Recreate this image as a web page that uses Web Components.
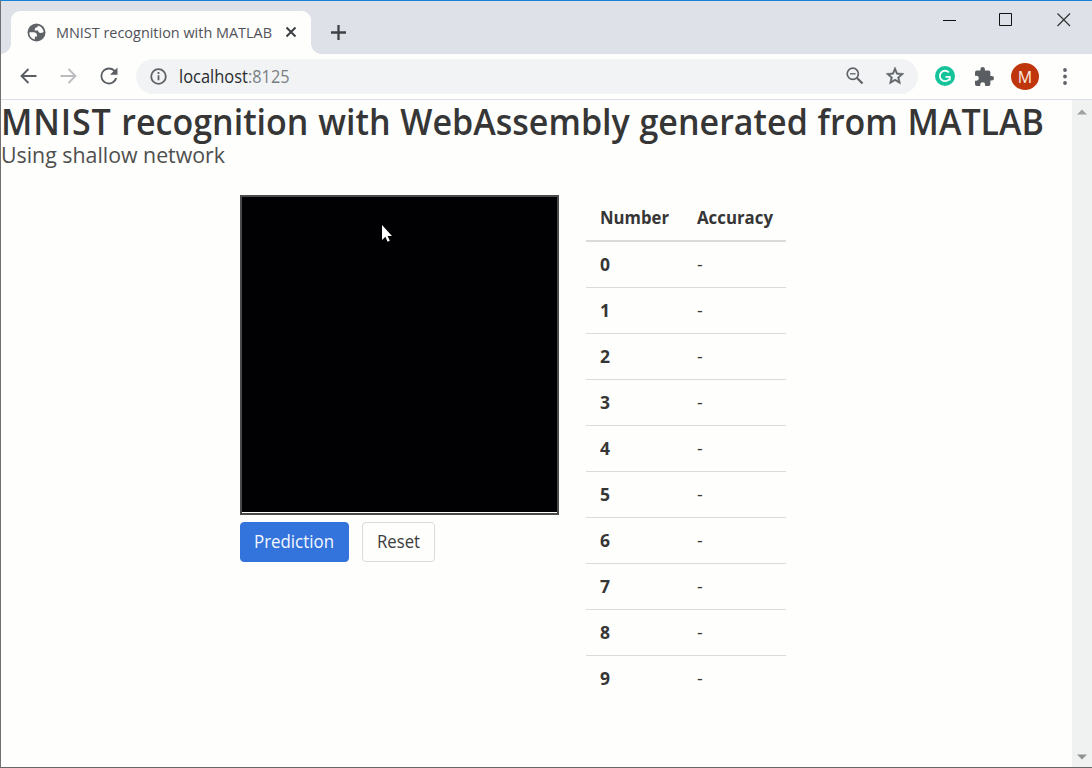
<!DOCTYPE html>
<html lang="en">
<head>
<meta charset="utf-8">
<title>MNIST recognition with MATLAB</title>
<style>
html,body{margin:0;height:100%;overflow:hidden;background:#fefefd}
body{font-family:"Open Sans","Noto Sans",sans-serif;color:#363636}
.wide{letter-spacing:.9px}
</style>
</head>
<body>
<browser-window>
  <tab-strip slot="tabs"><fit-text w="216">MNIST recognition with MATLAB</fit-text></tab-strip>
  <address-bar slot="toolbar" host="localhost" port=":8125"></address-bar>
  <page-heading>
    <fit-text w="1043"><span class="wide">MNIST</span> recognition with WebAssembly generated from MATLAB</fit-text>
    <fit-text slot="sub" w="224">Using shallow network</fit-text>
  </page-heading>
  <digit-app></digit-app>
</browser-window>
<script>
const define = (name, html, setup) => customElements.define(name, class extends HTMLElement {
  connectedCallback() {
    if (this.shadowRoot) return;
    const t = document.createElement('template');
    t.innerHTML = html;
    const root = this.attachShadow({mode: 'open'});
    root.append(t.content.cloneNode(true));
    if (setup) setup(this, root);
  }
});

// Condenses its slotted text to the width given in "w".
define('fit-text', `<style>
:host{display:inline-block;white-space:nowrap;overflow:visible;text-align:left}
span{display:inline-block;transform-origin:0 50%}
</style><span><slot></slot></span>`, (el, root) => {
  const w = +el.getAttribute('w'), s = root.querySelector('span');
  el.style.width = w + 'px';
  const fit = () => {
    s.style.transform = '';
    const n = s.getBoundingClientRect().width;
    if (n) s.style.transform = 'scaleX(' + w / n + ')';
  };
  requestAnimationFrame(fit);
});

define('browser-window', `<style>
:host{display:flex;flex-direction:column;box-sizing:border-box;height:768px;width:1092px;
border-top:1px solid #1783d8;border-left:1px solid #6f6f74;border-bottom:1px solid #68686a;background:#fefefd}
.view{flex:1;min-height:0;display:flex}
main{flex:1;min-width:0}
</style><slot name="tabs"></slot><slot name="toolbar"></slot>
<div class="view"><main><slot></slot></main><scroll-rail></scroll-rail></div>`);

define('scroll-rail', `<style>
:host{width:20px;background:#f0f1f1;display:flex;flex-direction:column;justify-content:space-between;align-items:center;box-sizing:border-box;padding:9px 0 7px}
svg{display:block}
</style>
<svg width="10" height="6"><path d="M0 5.5 5 .5l5 5z" fill="#a0a0a0"/></svg>
<svg width="10" height="6"><path d="M0 .5h10l-5 5z" fill="#929292"/></svg>`);

define('tab-strip', `<style>
:host{display:flex;height:53px;background:#dee1e8;position:relative;flex:none}
.tab{margin:10px 0 0 10px;width:300px;box-sizing:border-box;height:43px;background:#fefefd;border-radius:9px 9px 0 0;display:flex;align-items:center;padding-left:16px;font-size:15px;color:#505257;position:relative}
.tab::before,.tab::after{content:"";position:absolute;bottom:0;width:10px;height:10px}
.tab::before{left:-10px;background:radial-gradient(circle at 0 0,transparent 9.5px,#fefefd 10px)}
.tab::after{right:-10px;background:radial-gradient(circle at 100% 0,transparent 9.5px,#fefefd 10px)}
.globe{margin-right:10px}
.label{margin-bottom:2px;display:block}
.x{margin-left:13px;margin-bottom:1px}
.plus{margin:24px 0 0 20px}
.win{margin:12px 21px 0 auto;height:14px}
svg{display:block;flex:none}
</style>
<div class="tab">
<svg class="globe" width="19" height="19" viewBox="0 0 19 19"><circle cx="9.500" cy="9.500" r="9" fill="#5f6368"/><path fill="#fefefd" d="M2.400 9.300h4.300c1.900 0 3.200 1 3.300 2.900v1.300H7.900v3.100A7.200 7.200 0 0 1 2.400 9.300zM11.300 2.700c2.800.7 4.900 3 5.300 6-.6.800-1.500 1.200-2.700 1.200-1.900 0-2.800-.8-2.800-2.300H7.700c-.1-2.200.7-3.300 2.600-3.300 0-.7.300-1.200 1-1.600z"/></svg>
<div class="label"><slot></slot></div>
<svg class="x" width="12" height="12"><path d="m1.500 1.500 9 9m0-9-9 9" stroke="#3c4043" stroke-width="2"/></svg>
</div>
<svg class="plus" width="15" height="15"><path d="M7.500 0v15M0 7.500h15" stroke="#3f4246" stroke-width="2.300"/></svg>
<svg class="win" width="128" height="14"><path d="M0 7.500h13M56.500.5h12v12h-12z" fill="none" stroke="#111"/><path d="m114.500.5 12.500 12.500m0-12.500L114.500 13" stroke="#333" stroke-width="1.200"/></svg>`);

define('address-bar', `<style>
:host{display:flex;height:45px;flex:none;border-bottom:1px solid #dcdee5;align-items:center;color:#5f6368;background:#fefefd;box-sizing:content-box}
svg{display:block;flex:none;margin-bottom:1px}
.back{margin-left:19px}.fwd{margin-left:23px}.re{margin-left:23px}
.box{margin-left:18px;width:782px;height:35px;border-radius:18px;background:#f1f3f4;display:flex;align-items:center;font-size:18px;box-sizing:border-box;padding:0 14px 0 14px}
.info{margin-right:12px}
.host,.port{margin-bottom:2px}
.host{color:#2b2c30}.port{color:#7a7e83}
.zoom{margin-left:auto;margin-right:22px}
.g{margin-left:17px}.p{margin-left:20px}
.av{margin-left:17px;width:28px;height:27px;border-radius:50%;background:#bf360c;color:#fbece5;font-size:16px;display:flex;align-items:center;justify-content:center}
.dots{margin-left:24px}
</style>
<svg class="back" width="17" height="16" fill="none" stroke="#5a5e63" stroke-width="1.900"><path d="M16.500 8H2M8.500 1 1.500 8l7 7"/></svg>
<svg class="fwd" width="17" height="16" fill="none" stroke="#babcbe" stroke-width="1.800"><path d="M.5 8H15M8.500 1l7 7-7 7"/></svg>
<svg class="re" width="18" height="18" viewBox="3.500 3.500 17 17"><path fill="#5a5e63" d="M17.650 6.350A7.960 7.960 0 0 0 12 4a8 8 0 1 0 7.730 10h-1.980A6.200 6.200 0 1 1 12 5.800c1.660 0 3.140.69 4.220 1.780L13 10.800h7V4z"/></svg>
<div class="box">
<svg class="info" width="17" height="17" fill="none" stroke="#5f6368" stroke-width="1.800"><circle cx="8.500" cy="8.500" r="7.300"/><path d="M8.500 7.300v5M8.500 4v2"/></svg>
<fit-text class="host" w="69"></fit-text><fit-text class="port" w="41.500"></fit-text>
<svg class="zoom" width="18" height="18" fill="none" stroke="#5f6368"><circle cx="6.800" cy="6.800" r="5.600" stroke-width="1.700"/><path d="m10.800 10.800 5.700 5.700" stroke-width="2.200"/><path d="M4 6.800h5.600" stroke-width="1.300"/></svg>
<svg width="18" height="18" viewBox="2 2 20 20"><path fill="#5f6368" stroke="#5f6368" stroke-width=".5" d="m22 9.240-7.190-.62L12 2 9.190 8.630 2 9.240l5.460 4.730L5.820 21 12 17.270 18.180 21l-1.630-7.030zM12 15.400l-3.760 2.270 1-4.280-3.320-2.880 4.380-.38L12 6.100l1.710 4.040 4.380.38-3.320 2.880 1 4.280z"/></svg>
</div>
<svg class="g" width="20" height="20"><circle cx="10" cy="10" r="10" fill="#15c39a"/><path d="M13.800 6.300A5.200 5.200 0 1 0 14.300 13M10.500 10.800h4.300v3.700" fill="none" stroke="#f4fffc" stroke-width="1.800"/></svg>
<svg class="p" width="19" height="19" viewBox="2 1 21 21"><path fill="#5a5e63" d="M20.500 11H19V7a2 2 0 0 0-2-2h-4V3.500a2.500 2.500 0 0 0-5 0V5H4a2 2 0 0 0-2 2v3.800h1.500a2.700 2.700 0 0 1 0 5.400H2V20a2 2 0 0 0 2 2h3.800v-1.500a2.700 2.700 0 0 1 5.400 0V22H17a2 2 0 0 0 2-2v-4h1.500a2.500 2.500 0 0 0 0-5z"/></svg>
<div class="av">M</div>
<svg class="dots" width="4" height="17" fill="#5f6368"><circle cx="2" cy="2" r="1.900"/><circle cx="2" cy="8.500" r="1.900"/><circle cx="2" cy="15" r="1.900"/></svg>`,
(el, root) => {
  root.querySelector('.host').textContent = el.getAttribute('host');
  root.querySelector('.port').textContent = el.getAttribute('port');
});

define('page-heading', `<style>
:host{display:block;height:95px}
h1,p{margin:0;white-space:nowrap}
h1{font-size:36px;font-weight:600;line-height:44px;height:41px;color:#363636;word-spacing:1px}
p{font-size:22px;line-height:26px;color:#4f4f4f}
</style><h1><slot></slot></h1><p><slot name="sub"></slot></p>`);

define('digit-app', `<style>
:host{display:flex;padding-left:239px;gap:27px;align-items:flex-start}
.left{width:319px}
.btns{display:flex;gap:13px;margin-top:7px}
</style>
<div class="left"><draw-pad></draw-pad><div class="btns">
<ui-button primary><fit-text w="80">Prediction</fit-text></ui-button><ui-button><fit-text w="43">Reset</fit-text></ui-button></div></div>
<score-table></score-table>`);

define('draw-pad', `<style>
:host{display:block;box-sizing:border-box;width:319px;height:320px;border:2px solid #4a4a4a;position:relative;background:#fefefd}
.ink{height:315px;background:#010103}
svg{position:absolute;left:139px;top:27px}
</style><div class="ink"></div>
<svg width="13" height="19"><path d="M1 1v15l3.400-3.200 2.200 5 2.200-1-2.200-4.800H11z" fill="#fff"/></svg>`);

define('ui-button', `<style>
:host{display:flex;box-sizing:border-box;height:40px;padding:0 14px 2px;border:1px solid #dbdbdb;border-radius:4px;align-items:center;font-size:18px;color:#3c3c3c;background:#fefefd}
:host([primary]){background:#3273dc;border-color:#3273dc;color:#f4f8ff;padding:0 14px 2px 13px}
</style><slot></slot>`);

define('score-table', `<style>
:host{display:block;font-size:17.500px;color:#363636}
.r{display:grid;grid-template-columns:97px 1fr;width:200px;box-sizing:border-box;padding:0 0 2px 14px;height:46px;align-items:center;border-bottom:1px solid #dbdbdb}
.h{height:47px;border-bottom-width:2px;font-weight:700}
.r:last-child{border:0;padding-bottom:3px}
b{font-weight:700}
</style><div class="r h"><fit-text w="69">Number</fit-text><fit-text w="76">Accuracy</fit-text></div>`,
(el, root) => {
  for (let i = 0; i < 10; i++) {
    const r = document.createElement('div');
    r.className = 'r';
    r.innerHTML = '<b>' + i + '</b><span>-</span>';
    root.append(r);
  }
});
</script>
</body>
</html>
